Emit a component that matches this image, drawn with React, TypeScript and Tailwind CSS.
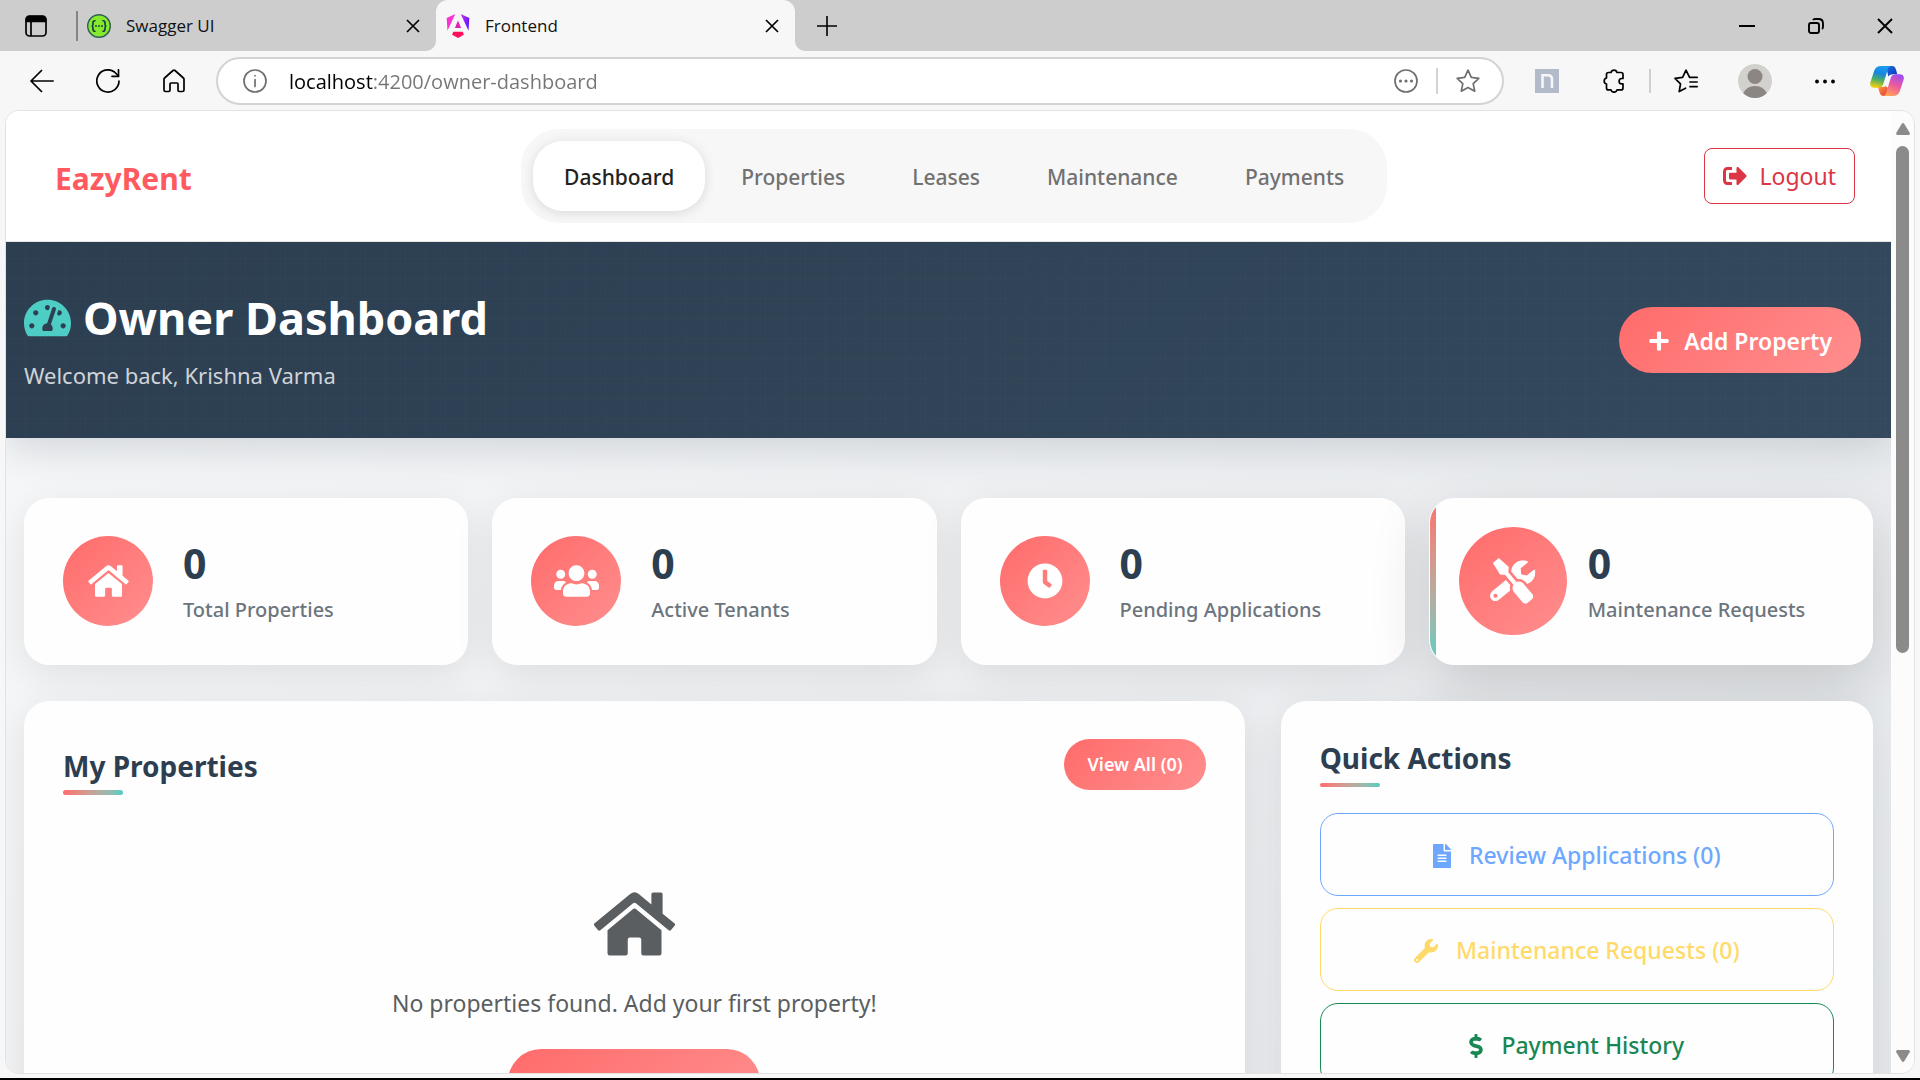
import React from 'react';
import {
  FaClock,
  FaDollarSign,
  FaFileAlt,
  FaHome,
  FaPlus,
  FaSignOutAlt,
  FaTachometerAlt,
  FaTools,
  FaUsers,
  FaWrench,
} from 'react-icons/fa';

type IconProps = { className?: string; children: React.ReactNode };

function LineIcon({ className = '', children }: IconProps) {
  return (
    <svg
      viewBox="0 0 24 24"
      fill="none"
      stroke="currentColor"
      strokeWidth="1.7"
      strokeLinecap="round"
      strokeLinejoin="round"
      aria-hidden="true"
      className={`size-6 shrink-0 ${className}`}
    >
      {children}
    </svg>
  );
}

function SwaggerLogo() {
  return (
    <svg viewBox="0 0 24 24" className="size-6 shrink-0" aria-hidden="true">
      <circle cx="12" cy="12" r="11.3" fill="#85ea2d" stroke="#2f5f55" strokeWidth="1.4" />
      <g fill="none" stroke="#173647" strokeWidth="1.6" strokeLinecap="round">
        <path d="M8 6.8c-1.6 0-2 .6-2 2v1.4c0 1.2-.4 1.8-1.4 1.8 1 0 1.4.6 1.4 1.8v1.4c0 1.4.4 2 2 2" />
        <path d="M16 6.8c1.6 0 2 .6 2 2v1.4c0 1.2.4 1.8 1.4 1.8-1 0-1.4.6-1.4 1.8v1.4c0 1.4-.4 2-2 2" />
      </g>
      <g fill="#173647">
        <circle cx="9" cy="12" r="0.9" />
        <circle cx="12" cy="12" r="0.9" />
        <circle cx="15" cy="12" r="0.9" />
      </g>
    </svg>
  );
}

function AngularLogo() {
  return (
    <svg viewBox="0 0 24 24" className="size-6 shrink-0" aria-hidden="true">
      <defs>
        <linearGradient id="ng-side" x1="0" y1="0" x2="1" y2="0.3">
          <stop offset="0" stopColor="#c637f3" />
          <stop offset="1" stopColor="#6a14ff" />
        </linearGradient>
        <linearGradient id="ng-core" x1="0" y1="0" x2="1" y2="1">
          <stop offset="0" stopColor="#ff0f4f" />
          <stop offset="1" stopColor="#fb1070" />
        </linearGradient>
      </defs>
      <path d="M9.308 0 .662 3.999l.814 12.856L9.308 0Z" fill="#fb32d2" />
      <path d="m14.692 0 7.832 16.855.814-12.856L14.692 0Z" fill="url(#ng-side)" />
      <path d="M8.903 13.93h6.198L12 6.396 8.903 13.93Z" fill="#e01fb5" />
      <path d="M16.712 17.711H7.288l-1.204 2.916L12 24l5.916-3.373-1.204-2.916Z" fill="url(#ng-core)" />
    </svg>
  );
}

function CopilotLogo() {
  return (
    <svg viewBox="0 0 34 30" className="h-[30px] w-[34px] shrink-0" aria-hidden="true">
      <defs>
        <linearGradient id="cp-left" x1="0.6" y1="0" x2="0.4" y2="1">
          <stop offset="0" stopColor="#1a9df0" />
          <stop offset="0.35" stopColor="#1487dd" />
          <stop offset="0.65" stopColor="#4fae63" />
          <stop offset="1" stopColor="#f2cf10" />
        </linearGradient>
        <linearGradient id="cp-right" x1="0.7" y1="0" x2="0.3" y2="1">
          <stop offset="0" stopColor="#a04df2" />
          <stop offset="0.5" stopColor="#ec5a9c" />
          <stop offset="1" stopColor="#ffa258" />
        </linearGradient>
        <linearGradient id="cp-top" x1="0" y1="0" x2="1" y2="1">
          <stop offset="0" stopColor="#1b6fe0" />
          <stop offset="1" stopColor="#0a35c0" />
        </linearGradient>
        <linearGradient id="cp-bottom" x1="0" y1="0" x2="1" y2="1">
          <stop offset="0" stopColor="#ff9a3a" />
          <stop offset="1" stopColor="#e5383f" />
        </linearGradient>
      </defs>
      <path d="M16 0h6c2.500 0 3.600 1.800 4.100 4l1.200 4.300h-4c-2.300 0-3.900.7-5 2.200Z" fill="url(#cp-top)" />
      <path d="M8 21h5c1.300 0 2-.3 2.700-.9L18 22l-1.500 6c-.5 1.400-1.400 2-2.600 2-2.600 0-3.800-1.500-4.500-4Z" fill="url(#cp-bottom)" />
      <path d="M11 0h9.500c-1.800.7-2.500 2.300-3.100 4.400L13.300 18c-.8 2.700-2.500 3.800-5 3.800h-4C.9 21.800-.5 19.600.4 16.300L4.200 4.800C5.200 1.700 7.500 0 11 0Z" fill="url(#cp-left)" />
      <path d="M29.700 8.300c3.400 0 4.800 2.200 3.900 5.400l-3.800 11.500C28.800 28.300 26.500 30 23 30h-9.500c1.800-.7 2.500-2.300 3.100-4.400l4.100-13.500c.8-2.700 2.500-3.800 5-3.800Z" fill="url(#cp-right)" />
    </svg>
  );
}

function CloseIcon() {
  return (
    <svg viewBox="0 0 14 14" className="size-3.5" fill="none" stroke="currentColor" strokeWidth="1.7" aria-hidden="true">
      <path d="M1 1l12 12M13 1 1 13" />
    </svg>
  );
}

function TabStrip() {
  return (
    <div className="flex h-[51px] shrink-0 bg-[#f7f7f7]">
      <div className="flex w-[436px] shrink-0 items-center rounded-br-[10px] bg-[#cdcdcd] pl-6">
        <button aria-label="Tab actions" className="shrink-0">
          <svg viewBox="0 0 24 24" className="size-6" fill="none" stroke="#000" strokeWidth="1.7" aria-hidden="true">
            <rect x="2" y="2" width="20" height="20" rx="3.5" />
            <path d="M2.500 7.500V5A2.500 2.500 0 0 1 5 2.500h14A2.500 2.500 0 0 1 21.500 5v2.500Z" fill="#000" />
            <path d="M7 7.500V22" />
          </svg>
        </button>
        <span className="ml-7 h-[30px] w-0.5 bg-[#858585]" />
        <div className="ml-[9px] flex flex-1 items-center pr-4">
          <SwaggerLogo />
          <span className="ml-[15px] flex-1 text-[17px] text-[#111]">Swagger UI</span>
          <button aria-label="Close Swagger UI">
            <CloseIcon />
          </button>
        </div>
      </div>
      <div className="w-[359px] shrink-0 bg-[#cdcdcd]">
        <div className="flex h-full items-center rounded-t-[12px] bg-[#f7f7f7] pr-4 pl-2.5">
          <AngularLogo />
          <span className="ml-[15px] flex-1 text-[17px] text-[#111]">Frontend</span>
          <button aria-label="Close Frontend">
            <CloseIcon />
          </button>
        </div>
      </div>
      <div className="flex flex-1 items-center justify-between rounded-bl-[10px] bg-[#cdcdcd] pr-[27px] pl-[21px]">
        <button aria-label="New tab">
          <svg viewBox="0 0 22 22" className="size-[22px]" stroke="#000" strokeWidth="1.6" aria-hidden="true">
            <path d="M11 1v20M1 11h20" />
          </svg>
        </button>
        <div className="flex items-center gap-[53px]">
          <button aria-label="Minimize">
            <svg viewBox="0 0 16 16" className="size-4" stroke="#000" strokeWidth="2" aria-hidden="true">
              <path d="M0 8h16" />
            </svg>
          </button>
          <button aria-label="Restore">
            <svg viewBox="0 0 16 16" className="size-4" fill="none" stroke="#000" strokeWidth="1.9" aria-hidden="true">
              <rect x="1" y="5" width="10" height="10" rx="2" />
              <path d="M5 2q.5-1 2-1h3.500Q15 1 15 5.500V9q0 1.300-1 2" />
            </svg>
          </button>
          <button aria-label="Close window">
            <svg viewBox="0 0 16 16" className="size-4" stroke="#000" strokeWidth="1.9" aria-hidden="true">
              <path d="M1 1l14 14M15 1 1 15" />
            </svg>
          </button>
        </div>
      </div>
    </div>
  );
}

function Toolbar() {
  return (
    <div className="flex shrink-0 items-center bg-[#f7f7f7] pt-1.5 pr-4 pb-[5px] pl-[30px] text-black">
      <div className="flex items-center gap-[42px]">
        <button aria-label="Back">
          <LineIcon>
            <path d="M23.200 12H1M11.500 1.500 1 12l10.500 10.500" />
          </LineIcon>
        </button>
        <button aria-label="Refresh">
          <LineIcon>
            <path d="M23 12A11.100 11.100 0 1 1 18.500 3L22.500 7" />
            <path d="M22.500.8V7.300H16" />
          </LineIcon>
        </button>
        <button aria-label="Home">
          <LineIcon>
            <path d="M2 10.300q0-.8.600-1.300l8.400-7.500q1-.9 2 0L21.400 9q.600.5.600 1.300V21q0 1.500-1.500 1.500h-3.200q-1.300 0-1.300-1.300V15q0-1-1-1H9q-1 0-1 1v6.200q0 1.300-1.300 1.300H3.500Q2 22.500 2 21Z" />
          </LineIcon>
        </button>
      </div>
      <div className="ml-[30px] flex h-12 flex-1 items-center rounded-full border-2 border-[#d3d3d3] bg-white pr-[22px] pl-[25px] text-[#6f6f6f]">
        <LineIcon>
          <circle cx="12" cy="12" r="11" />
          <path d="M12 10.500v7M12 6.700v.1" />
        </LineIcon>
        <input
          aria-label="Address"
          defaultValue="localhost:4200/owner-dashboard"
          className="ml-[22px] min-w-0 flex-1 bg-[linear-gradient(90deg,#000_85px,#757575_85px)] bg-clip-text pt-0.5 text-[20px] text-transparent outline-none"
        />
        <button aria-label="Site options">
          <LineIcon>
            <circle cx="12" cy="12" r="11" />
            <g fill="currentColor" stroke="none">
              <circle cx="6.5" cy="12" r="1.6" />
              <circle cx="12" cy="12" r="1.6" />
              <circle cx="17.5" cy="12" r="1.6" />
            </g>
          </LineIcon>
        </button>
        <span className="mx-[18px] h-[26px] w-0.5 bg-[#d3d3d3]" />
        <button aria-label="Add to favorites">
          <LineIcon>
            <path d="M12 1.200 15.300 8.400l7.500.9-5.600 5.300 1.500 7.600L12 18.600l-6.700 3.600 1.500-7.600L1.200 9.300l7.500-.9Z" />
          </LineIcon>
        </button>
      </div>
      <button aria-label="Notes extension" className="ml-[31px]">
        <svg viewBox="0 0 24 24" className="size-6" aria-hidden="true">
          <rect width="24" height="24" fill="#b3bbca" />
          <path d="M7.500 19V6.200h5.500q4 0 4 4V19" fill="none" stroke="#f4f6fa" strokeWidth="2.6" />
        </svg>
      </button>
      <button aria-label="Extensions" className="ml-[43px]">
        <LineIcon>
          <path d="M9 3.500a3.100 3.100 0 0 1 6 0h4q2 0 2 2v4h-1.200a2.700 2.700 0 0 0 0 5.400H21v4q0 2-2 2h-4a3.100 3.100 0 0 1-6 0H6.500q-2 0-2-2V15a3.100 3.100 0 0 1 0-6V5.500q0-2 2-2Z" />
        </LineIcon>
      </button>
      <span className="ml-[23px] h-6 w-0.5 bg-[#cfcfcf]" />
      <button aria-label="Favorites" className="ml-[23px]">
        <LineIcon>
          <path d="M15.600 8.300 12 1.200 8.600 8.300 1 9.400l5.500 5.400-1.300 7.800 6.300-3.400M16 8.300h7.200M16 13h7.200M16 17.700h7.200" />
        </LineIcon>
      </button>
      <button aria-label="Profile" className="ml-10 size-[34px] overflow-hidden rounded-full bg-[#d3d1cd]">
        <svg viewBox="0 0 34 34" fill="#8b8683" aria-hidden="true">
          <circle cx="17" cy="12.5" r="7.5" />
          <ellipse cx="17" cy="33" rx="12.5" ry="11" />
        </svg>
      </button>
      <button aria-label="Settings and more" className="ml-[42px]">
        <svg viewBox="0 0 22 22" className="size-[22px]" aria-hidden="true">
          <circle cx="3" cy="11.5" r="1.9" />
          <circle cx="11" cy="11.5" r="1.9" />
          <circle cx="19" cy="11.5" r="1.9" />
        </svg>
      </button>
      <button aria-label="Copilot" className="ml-[34px]">
        <CopilotLogo />
      </button>
    </div>
  );
}

const navItems = ['Dashboard', 'Properties', 'Leases', 'Maintenance', 'Payments'];

function SiteHeader() {
  return (
    <header className="relative z-20 flex items-center justify-between border-b border-[#e5e5e5] bg-white py-[18px] pr-9 pl-[49px]">
      <a href="#home" className="mr-3 pt-1 text-[30px] font-bold text-[#ff5a5f]">
        EazyRent
      </a>
      <nav className="flex gap-[5px] rounded-[38px] bg-[#f7f7f7] p-3">
        {navItems.map((item, i) => (
          <a
            key={item}
            href={`#${item.toLowerCase()}`}
            className={
              i === 0
                ? 'rounded-[30px] bg-white px-[31px] pt-5 pb-[18px] text-[21px] leading-8 font-medium text-[#222] shadow-[0_2px_12px_rgba(0,0,0,0.12)]'
                : 'rounded-[30px] px-[31px] pt-5 pb-[18px] text-[21px] leading-8 font-medium text-[#717171]'
            }
          >
            {item}
          </a>
        ))}
      </nav>
      <button className="flex h-14 items-center gap-3 rounded-lg border border-[#dc3545] px-[18px] text-[23px] text-[#dc3545]">
        <FaSignOutAlt className="size-6" />
        Logout
      </button>
    </header>
  );
}

function Hero() {
  return (
    <section className="relative z-10 flex h-[196px] items-center justify-between bg-[repeating-linear-gradient(90deg,transparent_0_19px,rgba(255,255,255,0.015)_19px_20px),repeating-linear-gradient(0deg,transparent_0_19px,rgba(255,255,255,0.015)_19px_20px),linear-gradient(135deg,#2c3e50,#34495e)] pr-[30px] pl-[18px] shadow-[0_10px_40px_rgba(44,62,80,0.18)]">
      <div className="pt-0.5">
        <h1 className="flex items-center gap-3 text-[45px] leading-[58px] font-bold text-white">
          <FaTachometerAlt className="h-[42px] w-[47px] text-[#4ecdc4]" />
          Owner Dashboard
        </h1>
        <p className="mt-2.5 text-[22px] leading-9 text-[#d0d4d9]">Welcome back, Krishna Varma</p>
      </div>
      <button className="flex h-[66px] items-center gap-3.5 rounded-full bg-linear-135 from-[#ff6b6b] to-[#ff8e8e] px-[29px] pt-0.5 text-[23px] font-semibold text-white">
        <FaPlus className="size-[22px]" />
        Add Property
      </button>
    </section>
  );
}

const stats = [
  { label: 'Total Properties', icon: <FaHome className="h-9 w-[41px]" /> },
  { label: 'Active Tenants', icon: <FaUsers className="h-9 w-[45px]" /> },
  { label: 'Pending Applications', icon: <FaClock className="size-9" /> },
  { label: 'Maintenance Requests', icon: <FaTools className="size-9" />, hovered: true },
];

function StatCard({ label, icon, hovered }: { label: string; icon: React.ReactNode; hovered?: boolean }) {
  return (
    <article
      className={
        hovered
          ? 'relative flex h-[167px] items-center gap-[30px] overflow-hidden rounded-[25px] border border-white bg-[#fefefe] px-[38px] pb-0.5 shadow-[0_20px_60px_rgba(0,0,0,0.16)]'
          : 'relative flex h-[167px] items-center gap-[30px] overflow-hidden rounded-[25px] border border-white bg-[#fefefe] px-[38px] pb-0.5 shadow-[0_10px_40px_rgba(0,0,0,0.09)]'
      }
    >
      {hovered && <span className="absolute inset-y-0 left-0 w-1.5 bg-linear-to-b from-[#ff6b6b] to-[#4ecdc4]" />}
      <div
        className={
          hovered
            ? 'flex size-[90px] shrink-0 scale-120 rotate-5 items-center justify-center rounded-full bg-linear-135 from-[#ff6b6b] to-[#ff8e8e] text-white'
            : 'flex size-[90px] shrink-0 items-center justify-center rounded-full bg-linear-135 from-[#ff6b6b] to-[#ff8e8e] text-white'
        }
      >
        {icon}
      </div>
      <div>
        <p className="text-[41px] leading-[55px] font-bold text-[#2c3e50]">0</p>
        <p className="mt-1 text-[20px] leading-[30px] font-medium whitespace-nowrap text-[#6c757d]">{label}</p>
      </div>
    </article>
  );
}

function PropertiesCard() {
  return (
    <section className="col-span-2 rounded-[25px] bg-[#fefefe] px-[39px] pt-[38px] pb-20 shadow-[0_10px_40px_rgba(0,0,0,0.09)]">
      <div className="flex items-start justify-between">
        <div className="pt-[9px]">
          <h2 className="text-[28px] leading-9 font-bold text-[#2c3e50]">My Properties</h2>
          <span className="mt-1.5 block h-[5px] w-[60px] rounded-full bg-linear-to-r from-[#ff6b6b] to-[#4ecdc4]" />
        </div>
        <button className="h-[51px] rounded-full bg-linear-135 from-[#ff6b6b] to-[#ff8e8e] px-[23px] text-[18px] font-semibold text-white">
          View All (0)
        </button>
      </div>
      <div className="mt-[93px] flex flex-col items-center text-[#5a5e60]">
        <FaHome className="h-[72px] w-[81px]" />
        <p className="mt-[25px] text-[23px] leading-9">No properties found. Add your first property!</p>
        <button className="mt-7 flex h-[72px] items-center gap-3.5 rounded-[33px] bg-linear-135 from-[#ff6b6b] to-[#ff8e8e] px-[34px] pt-1 text-[23px] leading-none font-semibold text-white">
          <FaPlus className="size-[22px]" />
          Add Property
        </button>
      </div>
    </section>
  );
}

function QuickActions() {
  return (
    <section className="rounded-[25px] bg-[#fefefe] px-[39px] pt-[39px] pb-10 shadow-[0_10px_40px_rgba(0,0,0,0.09)]">
      <h2 className="text-[28px] leading-9 font-bold text-[#2c3e50]">Quick Actions</h2>
      <span className="mt-[7px] block h-1 w-[60px] rounded-full bg-linear-to-r from-[#ff6b6b] to-[#4ecdc4]" />
      <div className="mt-[26px] flex flex-col gap-3 text-[23px] font-medium">
        <button className="flex h-[83px] items-center justify-center gap-[18px] rounded-[18px] border border-[#6ea8fe] pt-0.5 text-[#6ea8fe]">
          <FaFileAlt className="h-6 w-[18px]" />
          Review Applications (0)
        </button>
        <button className="flex h-[83px] items-center justify-center gap-[18px] rounded-[18px] border border-[#ffda6a] pt-0.5 text-[#ffda6a]">
          <FaWrench className="size-6" />
          Maintenance Requests (0)
        </button>
        <button className="flex h-[83px] items-center justify-center gap-[18px] rounded-[18px] border border-[#198754] pt-0.5 text-[#198754]">
          <FaDollarSign className="h-6 w-[14px]" />
          Payment History
        </button>
      </div>
    </section>
  );
}

function Scrollbar() {
  return (
    <div className="flex w-[23px] shrink-0 flex-col items-center bg-[#fcfcfc] pt-3 pb-[11px]">
      <svg viewBox="0 0 14 12" className="h-3 w-3.5" fill="#8b8b8b" aria-hidden="true">
        <path d="M5.800.8q1.200-1.400 2.400 0l5.500 9q.6 1.800-1 2.200H1.300q-1.600-.4-1-2.200Z" />
      </svg>
      <span className="mt-[11px] h-[507px] w-[13px] rounded-full bg-[#8b8b8b]" />
      <svg viewBox="0 0 14 12" className="mt-auto h-3 w-3.5 rotate-180" fill="#8b8b8b" aria-hidden="true">
        <path d="M5.800.8q1.200-1.400 2.400 0l5.500 9q.6 1.800-1 2.200H1.300q-1.600-.4-1-2.200Z" />
      </svg>
    </div>
  );
}

export default function App() {
  return (
    <div className="flex h-screen flex-col overflow-hidden border-b-2 border-black bg-[#f7f7f7] font-['Open_Sans',sans-serif]">
      <TabStrip />
      <Toolbar />
      <div className="mx-[5px] mb-1 flex min-h-0 flex-1 overflow-hidden rounded-[14px] border border-[#e2e2e2]">
        <div className="h-full min-w-0 flex-1 overflow-hidden bg-linear-135 from-[#f8f9fa] to-[#e6e9ec] font-['Noto_Sans','Open_Sans',sans-serif]">
          <SiteHeader />
          <Hero />
          <main className="px-[18px] pt-[60px]">
            <div className="grid grid-cols-4 gap-6">
              {stats.map((s) => (
                <StatCard key={s.label} {...s} />
              ))}
            </div>
            <div className="relative mt-9 grid grid-cols-3 gap-9">
              <PropertiesCard />
              <QuickActions />
            </div>
          </main>
        </div>
        <Scrollbar />
      </div>
    </div>
  );
}
